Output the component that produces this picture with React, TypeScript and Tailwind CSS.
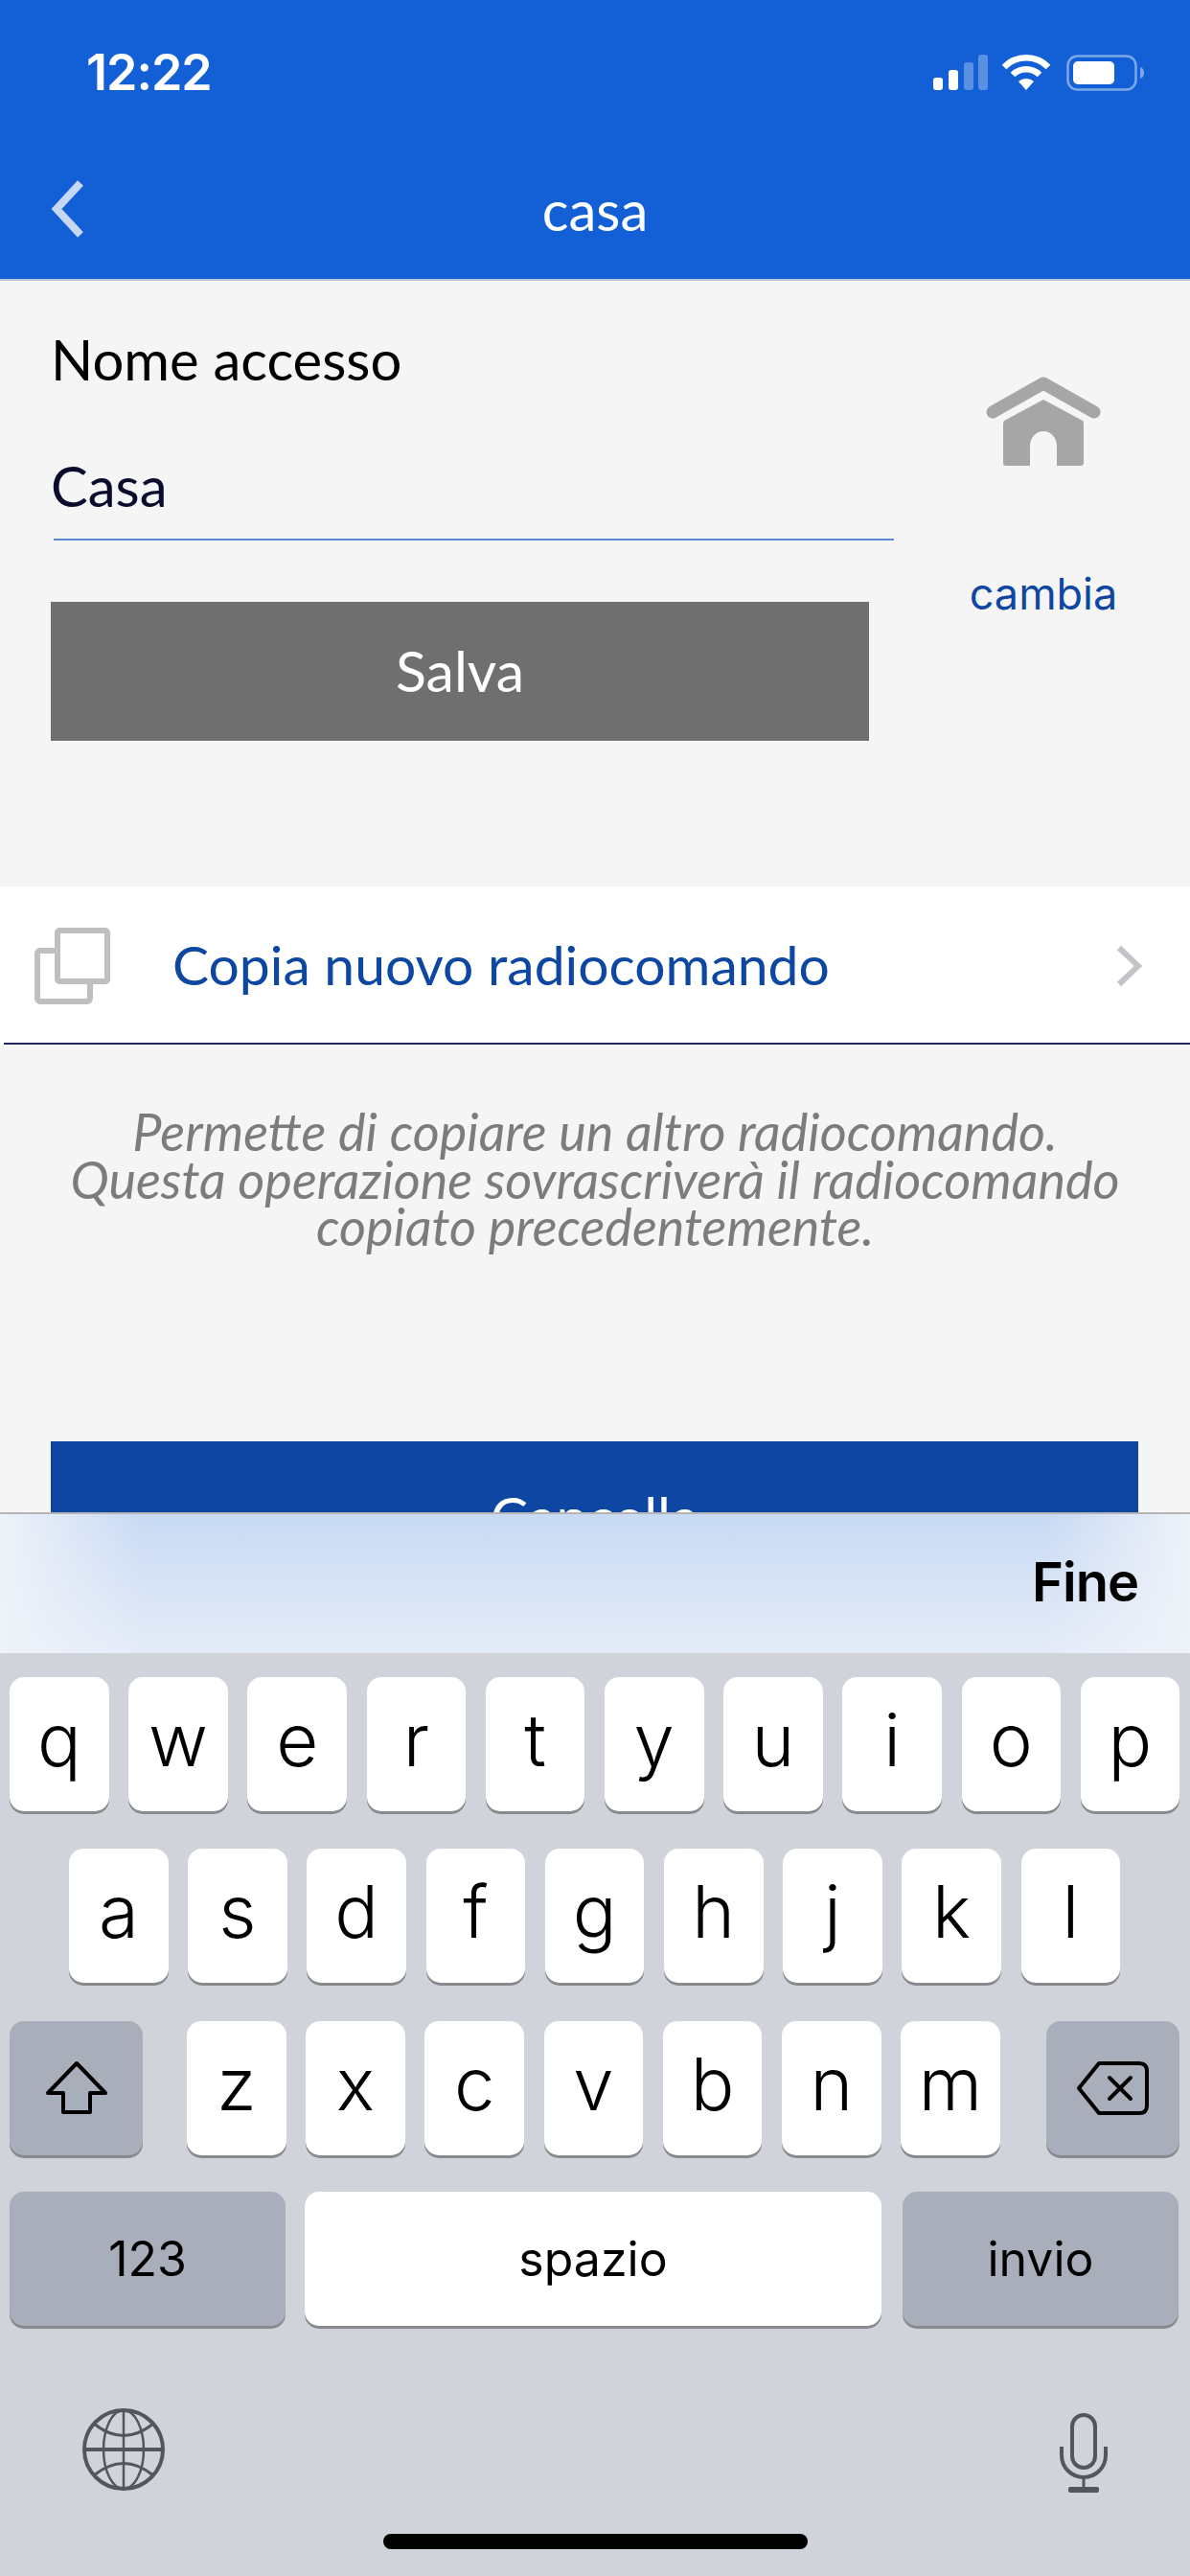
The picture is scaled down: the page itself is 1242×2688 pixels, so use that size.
const rowOne = ['q', 'w', 'e', 'r', 't', 'y', 'u', 'i', 'o', 'p'];
const rowTwo = ['a', 's', 'd', 'f', 'g', 'h', 'j', 'k', 'l'];
const rowThree = ['z', 'x', 'c', 'v', 'b', 'n', 'm'];

function LetterKey({ label }: { label: string }) {
  return (
    <div className="w-[103.6px] h-[140px] flex items-center justify-center bg-white rounded-[15px] shadow-[0_3px_0_#898a8d] text-[76px] font-light leading-none text-black pb-[10px]">
      {label}
    </div>
  );
}

function StatusIcons() {
  return (
    <div className="flex items-center gap-[16px]">
      <svg className="-mr-[2px]" width="58" height="38" viewBox="0 0 58 38">
        <rect x="1" y="24" width="10" height="13" rx="3" fill="#fff" />
        <rect x="17" y="16" width="10" height="21" rx="3" fill="#fff" />
        <rect x="33" y="8" width="10" height="29" rx="3" fill="#fff" fillOpacity="0.3" />
        <rect x="48" y="0" width="10" height="37" rx="3" fill="#fff" fillOpacity="0.3" />
      </svg>
      <svg width="52" height="38" viewBox="0 0 52 38">
        <path d="M3 13 A32 32 0 0 1 49 13" fill="none" stroke="#fff" strokeWidth="6.5" />
        <path d="M12 21 A20 20 0 0 1 40 21" fill="none" stroke="#fff" strokeWidth="6.5" />
        <path d="M18 28 L26 37 L34 28 A12 12 0 0 0 18 28 Z" fill="#fff" />
      </svg>
      <svg width="81" height="38" viewBox="0 0 81 38">
        <rect x="1.5" y="1.5" width="71" height="35" rx="10" fill="none" stroke="#fff" strokeOpacity="0.45" strokeWidth="2.5" />
        <rect x="7" y="7" width="43" height="24" rx="5" fill="#fff" />
        <path d="M77 13 C80 14 81 16 81 19 C81 22 80 24 77 25 Z" fill="#fff" fillOpacity="0.45" />
      </svg>
    </div>
  );
}

function HouseIcon() {
  return (
    <svg width="120" height="94" viewBox="0 0 120 94">
      <path d="M7 37 L60 7 L113 37" fill="none" stroke="#a6a6a6" strokeWidth="13" strokeLinecap="round" strokeLinejoin="round" />
      <path d="M60 24 L101 46 Q102 47 102 50 L102 90 Q102 93 99 93 L74 93 L74 72 A14 15 0 0 0 46 72 L46 93 L21 93 Q18 93 18 90 L18 50 Q18 47 19 46 Z" fill="#a6a6a6" />
    </svg>
  );
}

function CopyIcon() {
  return (
    <svg width="80" height="80" viewBox="0 0 80 80">
      <rect x="3" y="24" width="55" height="53" rx="3" fill="#fff" stroke="#bfbfbf" strokeWidth="6" />
      <rect x="24" y="3" width="52" height="53" rx="2" fill="#fff" stroke="#bfbfbf" strokeWidth="6" />
    </svg>
  );
}

function ShiftIcon() {
  return (
    <svg width="66" height="58" viewBox="0 0 66 58">
      <path d="M33 3 L63 34 L47 34 L47 54 L19 54 L19 34 L3 34 Z" fill="none" stroke="#000" strokeWidth="4" strokeLinejoin="round" />
    </svg>
  );
}

function DeleteIcon() {
  return (
    <svg width="76" height="56" viewBox="0 0 76 56">
      <path d="M24 2 L66 2 Q74 2 74 10 L74 46 Q74 54 66 54 L24 54 L3 28 Z" fill="none" stroke="#000" strokeWidth="4" strokeLinejoin="round" />
      <path d="M35 17 L57 39 M57 17 L35 39" stroke="#000" strokeWidth="4" strokeLinecap="round" />
    </svg>
  );
}

function GlobeIcon() {
  return (
    <svg width="88" height="88" viewBox="0 0 88 88" fill="none" stroke="#53565e">
      <circle cx="44" cy="44" r="41" strokeWidth="4" />
      <ellipse cx="44" cy="44" rx="21" ry="41" strokeWidth="2.5" />
      <path d="M44 3 L44 85" strokeWidth="2.5" />
      <path d="M3 44 L85 44" strokeWidth="4" />
      <path d="M13 17 Q44 42 75 17" strokeWidth="3" />
      <path d="M13 71 Q44 46 75 71" strokeWidth="3" />
    </svg>
  );
}

function MicIcon() {
  return (
    <svg width="50" height="84" viewBox="0 0 50 84" fill="none" stroke="#53565e">
      <rect x="13" y="2" width="24" height="55" rx="12" strokeWidth="4" />
      <path d="M2 35 L2 44 A23 23 0 0 0 48 44 L48 35" strokeWidth="4" />
      <path d="M25 67 L25 78" strokeWidth="3" />
      <rect x="9" y="77" width="32" height="6" rx="2" fill="#53565e" stroke="none" />
    </svg>
  );
}

export default function App() {
  return (
    <div className="w-[1242px] h-[2688px] overflow-hidden flex flex-col bg-[#f5f5f5] font-['Lato',sans-serif]">
      {/* header */}
      <header className="h-[293px] shrink-0 bg-[#1360d6] border-b-2 border-[#b5c3d8] text-white">
        <div className="flex items-center justify-between pt-[50px] pl-[90px] pr-[48px] h-[102px]">
          <span className="text-[52px] font-semibold leading-none font-['Inter',sans-serif] tracking-[-1px]">12:22</span>
          <StatusIcons />
        </div>
        <div className="flex items-center justify-center h-[120px] mt-[57px] relative">
          <svg className="absolute left-[50px] top-[27px]" width="42" height="64" viewBox="0 0 42 64">
            <path d="M34 5 L9 32 L34 59" fill="none" stroke="#c6d8f5" strokeWidth="8" />
          </svg>
          <span className="text-[58px] leading-none">casa</span>
        </div>
      </header>

      {/* content under the keyboard */}
      <main className="h-[1285px] shrink-0 overflow-hidden">
        <section className="h-[632px] flex pl-[53px]">
          <div className="w-[880px] pt-[52px] flex flex-col">
            <p className="text-[58px] leading-[60px] text-black">Nome accesso</p>
            <p className="text-[58px] leading-[60px] text-[#0b0b2b] mt-[72px]">Casa</p>
            <div className="h-[2px] bg-[#5b8ad6] mt-[25px] ml-[3px]" />
            <button className="w-[854px] h-[145px] bg-[#6f6f6f] text-white text-[59px] mt-[64px]">Salva</button>
          </div>
          <div className="flex-1 flex flex-col items-center pt-[100px] pl-[3px]">
            <HouseIcon />
            <span className="text-[45px] leading-none text-[#0e47a1] mt-[110px] font-['Inter',sans-serif]">cambia</span>
          </div>
        </section>
        <div className="h-[165px] bg-white flex items-center pl-[36px] pr-[50px] relative">
          <CopyIcon />
          <span className="text-[57px] text-[#0e47a1] ml-[64px] flex-1 pb-[2px]">Copia nuovo radiocomando</span>
          <svg width="28" height="44" viewBox="0 0 28 44">
            <path d="M4 3 L24 22 L4 41" fill="none" stroke="#c4c4c8" strokeWidth="6" />
          </svg>
          <div className="absolute left-[4px] right-0 bottom-0 h-[2px] bg-[#23275c]" />
        </div>
        <p className="text-[54px] leading-[49.5px] italic text-[#7c7c7c] text-center mt-[66px]">
          Permette di copiare un altro radiocomando.
          <br />
          Questa operazione sovrascriverà il radiocomando
          <br />
          copiato precedentemente.
        </p>
        <button className="block ml-[53px] mt-[199px] w-[1135px] h-[160px] bg-[#0e47a1] text-white text-[59px]">Cancella</button>
      </main>

      {/* toolbar */}
      <div className="h-[147px] shrink-0 border-t-2 border-[#b5b5b5] flex items-center justify-end pr-[54px] pb-[4px] bg-[linear-gradient(90deg,#eef2f9_0%,transparent_12%,transparent_88%,#eef2f9_100%),linear-gradient(180deg,#c8daf4,#e5ecf8)]">
        <span className="text-[56px] font-semibold leading-none text-black font-['Inter',sans-serif] tracking-[-1px]">Fine</span>
      </div>

      {/* keyboard */}
      <div className="flex-1 bg-[#d0d3da] flex flex-col px-[10px] pt-[25px] font-['Inter',sans-serif]">
        <div className="flex gap-[20.6px]">
          {rowOne.map((k) => (
            <LetterKey key={k} label={k} />
          ))}
        </div>
        <div className="flex gap-[20.6px] pl-[62px] mt-[39px]">
          {rowTwo.map((k) => (
            <LetterKey key={k} label={k} />
          ))}
        </div>
        <div className="flex mt-[40px]">
          <div className="w-[139px] h-[140px] flex items-center justify-center bg-[#a9afba] rounded-[15px] shadow-[0_3px_0_#898a8d]">
            <ShiftIcon />
          </div>
          <div className="flex gap-[20.6px] ml-[46px]">
            {rowThree.map((k) => (
              <LetterKey key={k} label={k} />
            ))}
          </div>
          <div className="w-[139px] h-[140px] flex items-center justify-center bg-[#a9afba] rounded-[15px] shadow-[0_3px_0_#898a8d] ml-[48px]">
            <DeleteIcon />
          </div>
        </div>
        <div className="flex mt-[38px] text-[50px] text-black">
          <div className="w-[288px] h-[140px] flex items-center justify-center bg-[#a9afba] rounded-[15px] shadow-[0_3px_0_#898a8d]">123</div>
          <div className="w-[602px] h-[140px] flex items-center justify-center bg-white rounded-[15px] shadow-[0_3px_0_#898a8d] ml-[20px]">spazio</div>
          <div className="w-[288px] h-[140px] flex items-center justify-center bg-[#a9afba] rounded-[15px] shadow-[0_3px_0_#898a8d] ml-[22px]">invio</div>
        </div>
        <div className="flex items-center justify-between pl-[75px] pr-[76px] mt-[83px]">
          <GlobeIcon />
          <div className="mt-[8px]">
            <MicIcon />
          </div>
        </div>
        <div className="w-[443px] h-[16px] rounded-full bg-black ml-[390px] mt-[42px]" />
      </div>
    </div>
  );
}
